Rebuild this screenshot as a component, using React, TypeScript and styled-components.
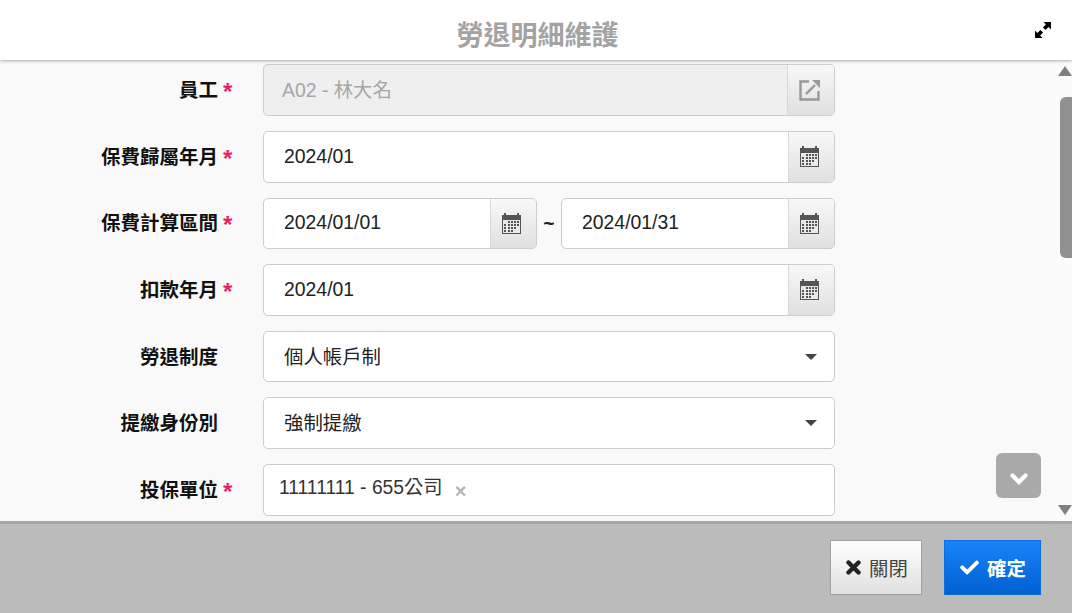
import React from "react"
import styled, { createGlobalStyle } from "styled-components"
import { FaCheck } from "react-icons/fa"

const GlobalStyle = createGlobalStyle`
  html, body {
    margin: 0;
    padding: 0;
    height: 100%;
    overflow: hidden;
  }
  body {
    font-family: "Liberation Sans", "Noto Sans CJK TC", sans-serif;
  }
  * {
    box-sizing: border-box;
  }
`

const Dialog = styled.div`
  width: 1072px;
  height: 613px;
  display: flex;
  flex-direction: column;
  position: relative;
  background: #bbbbbb;
`

const Header = styled.header`
  height: 60px;
  flex: none;
  display: flex;
  align-items: center;
  justify-content: center;
  position: relative;
  z-index: 2;
  background: #fff;
  box-shadow: 0 1px 3px rgb(0 0 0 / 0.3);
  padding-top: 12px;
`

const Title = styled.h1`
  margin: 0 0 0 3px;
  font-size: 27px;
  line-height: 32px;
  font-weight: bold;
  color: #a3a3a3;
`

const ExpandButton = styled.button`
  position: absolute;
  top: 22px;
  right: 21px;
  width: 16px;
  height: 16px;
  padding: 0;
  border: 0;
  background: none;
  display: block;
`

const Body = styled.div`
  height: 461px;
  flex: none;
  display: flex;
  background: #f9f9f9;
  position: relative;
`

const Form = styled.div`
  flex: 1;
  padding-top: 4.4px;
  display: flex;
  flex-direction: column;
  gap: 15px;
`

const Row = styled.div`
  display: flex;
  align-items: center;
  height: 51.6px;
`

const Label = styled.label`
  width: 218px;
  flex: none;
  text-align: right;
  font-size: 19.5px;
  line-height: 24px;
  font-weight: bold;
  color: #111;
  position: relative;
`

const Star = styled.span`
  position: absolute;
  left: 223px;
  top: 0;
  color: #e91e63;
  font-size: 24px;
  line-height: 28px;
  font-weight: bold;
`

const Fields = styled.div`
  width: 572px;
  margin-left: 45px;
  display: flex;
  align-items: center;
`

const Field = styled.div<{ $disabled?: boolean }>`
  flex: 1;
  height: 51.6px;
  display: flex;
  align-items: stretch;
  border: 1px solid #cccccc;
  border-radius: 5px;
  overflow: hidden;
  background: ${p => (p.$disabled ? "#efefef" : "#fff")};
`

const Value = styled.div<{ $disabled?: boolean; $date?: boolean }>`
  flex: 1;
  display: flex;
  align-items: center;
  padding-left: ${p => (p.$disabled ? "18px" : "20px")};
  padding-bottom: ${p => (p.$date ? "2px" : "0")};
  font-size: 19.4px;
  line-height: 24px;
  color: ${p => (p.$disabled ? "#a6a6a6" : "#222")};
`

const Addon = styled.div<{ $wide?: boolean }>`
  width: ${p => (p.$wide ? "47px" : "46px")};
  flex: none;
  display: flex;
  align-items: center;
  justify-content: center;
  padding-right: 4px;
  border-left: 1px solid #d8d8d8;
  background: linear-gradient(#f8f8f8, #e0e0e0);
`

const Tilde = styled.span`
  width: 24px;
  flex: none;
  text-align: center;
  font-size: 19.4px;
  font-weight: bold;
  color: #222;
`

const Caret = styled.span`
  width: 0;
  height: 0;
  margin-right: 17px;
  align-self: center;
  border-left: 6.5px solid transparent;
  border-right: 6.5px solid transparent;
  border-top: 6px solid #444;
`

const Tag = styled.div`
  display: flex;
  align-items: center;
  padding-left: 15px;
  padding-bottom: 4px;
  font-size: 19.3px;
  line-height: 24px;
  color: #333;
`

const TagRemove = styled.span`
  margin-left: 12px;
  margin-top: 7px;
  color: #b5b5b5;
  font-size: 20px;
  font-weight: bold;
  line-height: 18px;
`

const ScrollTrack = styled.div`
  width: 17px;
  flex: none;
  position: relative;
  background: #fbfbfb;
`

const ScrollThumb = styled.div`
  position: absolute;
  top: 37px;
  left: 5px;
  width: 12px;
  height: 161px;
  border-radius: 6px 0 0 6px;
  background: #909090;
`

const ScrollArrow = styled.span<{ $down?: boolean }>`
  position: absolute;
  left: 3px;
  ${p => (p.$down ? "bottom: 6px;" : "top: 6px;")}
  width: 0;
  height: 0;
  border-left: 7px solid transparent;
  border-right: 7px solid transparent;
  ${p => (p.$down ? "border-top: 10px solid #808080;" : "border-bottom: 10px solid #808080;")}
`

const ScrollDown = styled.button`
  position: absolute;
  left: 996px;
  top: 393px;
  width: 45px;
  height: 45px;
  padding: 6px 0 0;
  border: 0;
  border-radius: 6px;
  background: #a9a9a9;
  display: flex;
  align-items: center;
  justify-content: center;
`

const Footer = styled.footer`
  flex: 1;
  display: flex;
  justify-content: flex-end;
  gap: 22px;
  border-top: 3px solid #a6a6a6;
  background: #bbbbbb;
  padding: 16px 31px 0 0;
`

const Button = styled.button<{ $primary?: boolean }>`
  height: 55px;
  display: flex;
  align-items: center;
  justify-content: center;
  gap: 8px;
  font-family: inherit;
  font-size: 19.4px;
  padding: 0 0 0 ${p => (p.$primary ? "1px" : "2px")};
  width: ${p => (p.$primary ? "97px" : "92px")};
  font-weight: ${p => (p.$primary ? "bold" : "normal")};
  color: ${p => (p.$primary ? "#fff" : "#444")};
  border: 1px solid ${p => (p.$primary ? "#0a6fe0" : "#a0a0a0")};
  background: ${p =>
    p.$primary
      ? "linear-gradient(#1a83fb, #0060d0)"
      : "linear-gradient(#ffffff, #e0e0e0)"};
`

const CalendarIcon = () => (
  <svg width="19" height="21" viewBox="0 0 19 21">
    <path fill="#555" d="M0 2h2V0h2v2h11V0h2v2h2v19H0z" />
    <rect x="1" y="7" width="17" height="13" fill="#e9e9e9" />
    <path
      fill="#555"
      d="M6 8h2v2H6zM9 8h2v2H9zM12 8h2v2h-2zM15 8h2v2h-2zM2 11h2v2H2zM6 11h2v2H6zM9 11h2v2H9zM12 11h2v2h-2zM15 11h2v2h-2zM2 14h2v2H2zM6 14h2v2H6zM9 14h2v2H9zM12 14h2v2h-2zM2 17h2v2H2zM6 17h2v2H6zM9 17h2v2H9z"
    />
  </svg>
)

const OpenIcon = () => (
  <svg width="21" height="21" viewBox="0 0 21 21" fill="none">
    <path stroke="#999" strokeWidth="2.4" d="M10 1.5H1.5v18h18V11" />
    <path stroke="#999" strokeWidth="2.4" d="M7 14 16 5" />
    <path fill="#999" d="M13 0h8v8z" />
  </svg>
)

const ExpandIcon = () => (
  <svg width="16" height="16" viewBox="0 0 16 16">
    <path fill="#000" d="M16 0v7.5l-2.4-2.4-3 3-2.7-2.7 3-3L8.5 0zM0 16V8.5l2.4 2.4 3-3 2.7 2.7-3 3L7.5 16z" />
  </svg>
)

const ChevronIcon = () => (
  <svg width="18" height="12" viewBox="0 0 18 12" fill="none">
    <path stroke="#fff" strokeWidth="4.2" strokeLinecap="round" d="M2.5 2.5 9 9l6.5-6.5" />
  </svg>
)

const CloseIcon = () => (
  <svg width="15" height="15" viewBox="0 0 15 15" fill="none">
    <path stroke="#222" strokeWidth="4.4" strokeLinecap="round" d="M2.5 2.5l10 10M12.5 2.5l-10 10" />
  </svg>
)

type DateProps = { value: string }

const DateField: React.FC<DateProps> = ({ value }) => (
  <Field>
    <Value $date>{value}</Value>
    <Addon>
      <CalendarIcon />
    </Addon>
  </Field>
)

type RowProps = { label: string; required?: boolean; children: React.ReactNode }

const FormRow: React.FC<RowProps> = ({ label, required, children }) => (
  <Row>
    <Label>
      {label}
      {required && <Star>*</Star>}
    </Label>
    <Fields>{children}</Fields>
  </Row>
)

export default function App() {
  return (
    <Dialog>
      <GlobalStyle />
      <Header>
        <Title>勞退明細維護</Title>
        <ExpandButton>
          <ExpandIcon />
        </ExpandButton>
      </Header>
      <Body>
        <Form>
          <FormRow label="員工" required>
            <Field $disabled>
              <Value $disabled>A02 - 林大名</Value>
              <Addon $wide>
                <OpenIcon />
              </Addon>
            </Field>
          </FormRow>
          <FormRow label="保費歸屬年月" required>
            <DateField value="2024/01" />
          </FormRow>
          <FormRow label="保費計算區間" required>
            <DateField value="2024/01/01" />
            <Tilde>~</Tilde>
            <DateField value="2024/01/31" />
          </FormRow>
          <FormRow label="扣款年月" required>
            <DateField value="2024/01" />
          </FormRow>
          <FormRow label="勞退制度">
            <Field>
              <Value>個人帳戶制</Value>
              <Caret />
            </Field>
          </FormRow>
          <FormRow label="提繳身份別">
            <Field>
              <Value>強制提繳</Value>
              <Caret />
            </Field>
          </FormRow>
          <FormRow label="投保單位" required>
            <Field>
              <Tag>
                11111111 - 655公司
                <TagRemove>×</TagRemove>
              </Tag>
            </Field>
          </FormRow>
        </Form>
        <ScrollTrack>
          <ScrollArrow />
          <ScrollThumb />
          <ScrollArrow $down />
        </ScrollTrack>
        <ScrollDown>
          <ChevronIcon />
        </ScrollDown>
      </Body>
      <Footer>
        <Button>
          <CloseIcon />
          關閉
        </Button>
        <Button $primary>
          <FaCheck size={19} />
          確定
        </Button>
      </Footer>
    </Dialog>
  )
}
